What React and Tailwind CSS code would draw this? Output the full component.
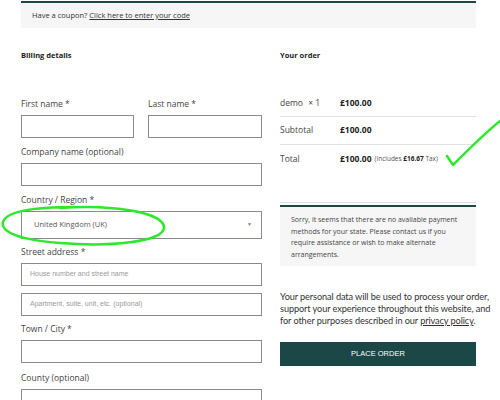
import React from 'react'

const font = { fontFamily: '"Open Sans", "Noto Sans", sans-serif' }

const Field = ({ label, className = '', children }) => (
  <div className={className}>
    {label && <label className="block text-[8.5px] text-[#444] mb-[5px] leading-[12px]">{label}</label>}
    {children}
  </div>
)

const Box = ({ placeholder, h = 'h-[23px]' }) => (
  <div className={`w-full ${h} border border-[#8a8a8a] flex items-center px-[8px] text-[7px] text-[#9a9a9a] font-['Liberation_Sans',Arial,sans-serif]`}>
    {placeholder}
  </div>
)

const App = () => {
  return (
    <div className="relative w-[500px] h-[400px] overflow-hidden bg-white" style={font}>
      {/* coupon */}
      <div className="mx-[21px] w-[455px] mt-[1px] border-t-2 border-[#1d4645] bg-[#f6f6f6] h-[27px] flex items-center pl-[11px] text-[7.5px] text-[#333]">
        Have a coupon?&nbsp;<span className="underline">Click here to enter your code</span>
      </div>

      <div className="flex pl-[21px] pt-[21px]">
        {/* billing */}
        <div className="w-[241px]">
          <h3 className="text-[7.5px] font-bold text-[#222] leading-[12px]">Billing details</h3>
          <div className="flex gap-[14px] mt-[37px]">
            <Field label="First name *" className="w-[113px]"><Box /></Field>
            <Field label="Last name *" className="w-[114px]"><Box /></Field>
          </div>
          <Field label="Company name (optional)" className="mt-[8px]"><Box /></Field>
          <Field label="Country / Region *" className="mt-[8px]">
            <div className="w-full h-[28px] border border-[#8a8a8a] flex items-center justify-between pl-[12px] pr-[9px] text-[7.5px] text-[#555]">
              <span>United Kingdom (UK)</span>
              <span className="text-[5px] text-[#777]">▼</span>
            </div>
          </Field>
          <Field label="Street address *" className="mt-[7px]">
            <Box placeholder="House number and street name" />
          </Field>
          <div className="mt-[7px]"><Box placeholder="Apartment, suite, unit, etc. (optional)" /></div>
          <Field label="Town / City *" className="mt-[7px]"><Box /></Field>
          <Field label="County (optional)" className="mt-[9px]"><Box /></Field>
        </div>

        {/* order */}
        <div className="ml-[18px] w-[196px]">
          <h3 className="text-[7.5px] font-bold text-[#222] leading-[12px]">Your order</h3>
          <div className="mt-[30px] text-[8.5px] text-[#444]">
            <div className="flex items-center h-[26px] border-b border-[#e2e2e2]">
              <span className="w-[60px]">demo <span className="ml-[3px]">× 1</span></span>
              <span className="font-bold text-[#222]">£100.00</span>
            </div>
            <div className="flex items-center h-[28px] border-b border-[#e2e2e2]">
              <span className="w-[60px]">Subtotal</span>
              <span className="font-bold text-[#222]">£100.00</span>
            </div>
            <div className="flex items-center h-[28px]">
              <span className="w-[60px]">Total</span>
              <span className="font-bold text-[#222]">£100.00</span>
              <span className="ml-[3px] text-[6.5px] text-[#555]">(includes <b className="text-[#222]">£16.67</b> Tax)</span>
            </div>
            <div className="h-[30px] border-b border-[#e2e2e2]" />
          </div>
          <div className="mt-[2px] border-t-2 border-[#1d4645] bg-[#f6f6f6] px-[11px] pt-[7px] pb-[5px] text-[7px] leading-[11.7px] text-[#444]">
            Sorry, it seems that there are no available payment methods for your state. Please contact us if you require assistance or wish to make alternate arrangements.
          </div>
          <p className="mt-[25px] text-[9.2px] leading-[12px] text-[#333] whitespace-nowrap tracking-[-0.1px] font-['Lato',sans-serif]">
            Your personal data will be used to process your order,<br />
            support your experience throughout this website, and<br />
            for other purposes described in our <span className="underline">privacy policy</span>.
          </p>
          <button className="mt-[15px] w-full h-[24px] bg-[#1b4746] text-white text-[7.5px] font-['Liberation_Sans',Arial,sans-serif]">
            PLACE ORDER
          </button>
        </div>
      </div>

      {/* annotations */}
      <svg className="absolute inset-0 pointer-events-none" width="500" height="400" viewBox="0 0 500 400">
        <path d="M60 208 C 110 204, 165 212, 164 228 C 162 242, 110 247, 60 243 C 20 240, 0 232, 3 222 C 6 212, 30 207, 75 207"
          fill="none" stroke="#2ee82e" strokeWidth="2.5" strokeLinecap="round" />
        <path d="M447 156 L 453 165 C 468 150, 485 133, 500 121"
          fill="none" stroke="#2ee82e" strokeWidth="2.5" strokeLinecap="round" strokeLinejoin="round" />
      </svg>
    </div>
  )
}

export default App
